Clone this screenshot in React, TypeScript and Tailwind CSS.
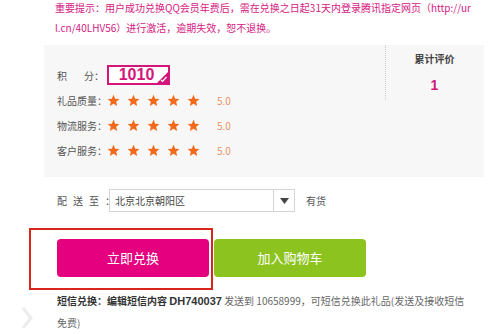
import { ReactNode } from "react";

const Star = () => (
  <svg width="13" height="13" viewBox="0 0 24 24">
    <path
      d="M12 1.5l3.1 7.1 7.7.7-5.8 5.1 1.7 7.6L12 18l-6.7 4 1.7-7.6-5.8-5.1 7.7-.7z"
      fill="#f26a1b"
    />
  </svg>
);

function RatingRow({ label }: { label: string }) {
  return (
    <div className="flex h-[20px] items-center">
      <span className="w-[50px] whitespace-nowrap text-[#555]">{label}：</span>
      <div className="flex items-center gap-[7px]">
        <Star />
        <Star />
        <Star />
        <Star />
        <Star />
      </div>
      <span className="ml-[17px] text-[#e8956a]">5.0</span>
    </div>
  );
}

function Button({ color, children }: { color: string; children: ReactNode }) {
  return (
    <button
      className={`flex h-[38px] w-[152px] items-center justify-center rounded-[4px] text-[13px] text-white ${color}`}
    >
      {children}
    </button>
  );
}

export default function App() {
  return (
    <div className="relative h-[334px] w-[500px] overflow-hidden bg-white font-['Noto_Sans_CJK_SC',sans-serif] text-[10px]">
      {/* notice */}
      <div className="-mt-[2px] whitespace-nowrap pl-[55px] text-[10px] leading-[20px] text-[#d6197f]">
        重要提示：用户成功兑换QQ会员年费后，需在兑换之日起31天内登录腾讯指定网页（http://ur
        <br />
        l.cn/40LHV56）进行激活，逾期失效，恕不退换。
      </div>

      {/* score panel */}
      <div className="ml-[44px] mt-[7px] flex h-[132px] w-[440px] bg-[#f7f7f7]">
        <div className="flex flex-1 flex-col gap-[5px] pl-[13px] pt-[20px]">
          <div className="flex h-[20px] items-center">
            <span className="flex w-[50px] text-[#555]">
              积<span className="w-[17px]" />分：
            </span>
            <div className="relative flex h-[20px] w-[63px] items-center justify-center border-2 border-[#d4157a] bg-white pr-[4px] font-['Liberation_Sans',sans-serif] text-[16px] font-bold text-[#d4157a]">
              1010
              <svg
                className="absolute bottom-0 right-0"
                width="11"
                height="11"
                viewBox="0 0 11 11"
              >
                <path d="M11 0V11H0z" fill="#d4157a" />
                <path
                  d="M4 8l1.6 1.4L9.5 5"
                  stroke="#fff"
                  strokeWidth="1.3"
                  fill="none"
                />
              </svg>
            </div>
          </div>
          <RatingRow label="礼品质量" />
          <RatingRow label="物流服务" />
          <RatingRow label="客户服务" />
        </div>
        <div className="relative w-[99px]">
          <div className="absolute left-0 top-0 h-[55px] border-l border-dotted border-[#c8c8c8]" />
          <div className="flex flex-col items-center pt-[6px]">
            <span className="font-bold text-[#444]">累计评价</span>
            <span className="mt-[9px] font-['Liberation_Sans',sans-serif] text-[14px] font-bold text-[#d4157a]">
              1
            </span>
          </div>
        </div>
      </div>

      {/* delivery */}
      <div className="mt-[12px] flex h-[23px] items-center pl-[57px]">
        <span className="w-[52px] whitespace-nowrap text-[#555]">
          <span className="tracking-[6px]">配送至</span>：
        </span>
        <div className="flex h-[23px] w-[186px] border border-[#d4d4d4] bg-white">
          <span className="flex flex-1 items-center pl-[5px] text-[#444]">北京北京朝阳区</span>
          <span className="flex w-[21px] items-center justify-center border-l border-[#d4d4d4]">
            <svg width="9" height="6" viewBox="0 0 9 6">
              <path d="M0 0h9L4.5 6z" fill="#444" />
            </svg>
          </span>
        </div>
        <span className="ml-[11px] text-[#555]">有货</span>
      </div>

      {/* buttons */}
      <div className="mt-[27px] flex gap-[5px] pl-[57px]">
        <Button color="bg-[#e4007e]">立即兑换</Button>
        <Button color="bg-[#8cc31f]">加入购物车</Button>
      </div>

      {/* sms */}
      <div className="mt-[13px] whitespace-nowrap pl-[57px] leading-[21px] text-[#666]">
        <span className="font-bold text-[#333]">
          短信兑换：编辑短信内容{" "}
          <span className="font-['Liberation_Sans',sans-serif] text-[11px]">DH740037</span>
        </span>{" "}
        发送到 10658999，可短信兑换此礼品(发送及接收短信
        <br />
        免费)
      </div>

      {/* highlight annotation */}
      <div className="absolute left-[29px] top-[228px] h-[62px] w-[184px] border-2 border-[#d9261c]" />

      {/* faint carousel arrow */}
      <svg className="absolute left-[21px] top-[306px]" width="12" height="24" viewBox="0 0 12 24">
        <path d="M2 2l8 10-8 10" stroke="#ececec" strokeWidth="3" fill="none" />
      </svg>
    </div>
  );
}
